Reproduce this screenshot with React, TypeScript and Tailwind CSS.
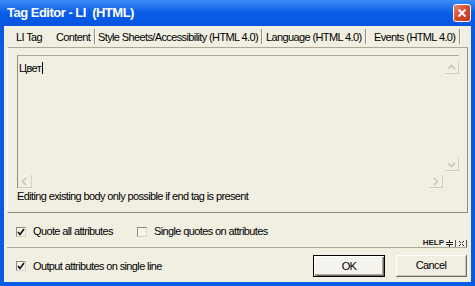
import React from "react";

const ui = "font-['Liberation_Sans',Arial,sans-serif] text-[11px] leading-[13px] tracking-[-0.62px] text-black whitespace-nowrap";

function Check({ checked }: { checked?: boolean }) {
  return (
    <span className="flex h-[10px] w-[10px] shrink-0 items-center justify-center border-t border-l border-[#8d8b82] border-r border-b border-r-[#d6d3c6] border-b-[#d6d3c6] bg-[#f4f3ee]">
      {checked ? (
        <svg width="8" height="8" viewBox="0 0 8 8">
          <path d="M1 4 L3 6.5 L7 1" fill="none" stroke="#111" strokeWidth="1.6" />
        </svg>
      ) : null}
    </span>
  );
}

function Chevron({ dir }: { dir: "up" | "down" | "left" | "right" }) {
  const d = {
    up: "M2 7 L5.5 3.5 L9 7",
    down: "M2 4 L5.5 7.5 L9 4",
    left: "M7 2 L3.5 5.5 L7 9",
    right: "M4 2 L7.5 5.5 L4 9",
  }[dir];
  return (
    <svg width="11" height="11" viewBox="0 0 11 11">
      <path d={d} fill="none" stroke="#c9c6b9" strokeWidth="1.6" />
    </svg>
  );
}

function ScrollBtn({ dir }: { dir: "up" | "down" | "left" | "right" }) {
  return (
    <div className="flex h-[13px] w-[14px] shrink-0 items-center justify-center border-r border-b border-[#d2cfc1]">
      <Chevron dir={dir} />
    </div>
  );
}

function TabSep() {
  return <div className="h-[15px] w-[2px] shrink-0 self-end border-l border-[#8f8d82] bg-[#fdfdfb]" />;
}

export default function App() {
  return (
    <div className="flex h-[286px] w-[475px] flex-col bg-[#0a5be4]">
      {/* title bar */}
      <div className="flex h-[26px] shrink-0 items-center justify-between bg-gradient-to-b from-[#3a8cf6] via-[#0a5ce6] to-[#0755e0] pl-[7px] pr-[4px]">
        <span className="whitespace-pre font-['Liberation_Sans',Arial,sans-serif] text-[13px] font-bold tracking-[-0.5px] text-white">
          Tag Editor - LI  (HTML)
        </span>
        <div className="flex h-[18px] w-[18px] items-center justify-center rounded-[3px] border border-white bg-gradient-to-br from-[#e9876b] via-[#d6472a] to-[#c23a1e]">
          <svg width="10" height="10" viewBox="0 0 10 10">
            <path d="M1.5 1.5 L8.5 8.5 M8.5 1.5 L1.5 8.5" stroke="white" strokeWidth="2" />
          </svg>
        </div>
      </div>

      {/* body */}
      <div className={`mx-[4px] flex h-[256px] flex-col bg-[#f1efe2] ${ui}`}>
        {/* tabs */}
        <div className="flex h-[21px] shrink-0 items-end pb-[3px]">
          <span className="ml-[12px] w-[40px] shrink-0">LI Tag</span>
          <span className="w-[38px] shrink-0">Content</span>
          <TabSep />
          <span className="w-[165px] shrink-0 pl-[2px]">Style Sheets/Accessibility (HTML 4.0)</span>
          <TabSep />
          <span className="w-[102px] shrink-0 pl-[3px]">Language (HTML 4.0)</span>
          <TabSep />
          <span className="w-[92px] shrink-0 pl-[7px]">Events (HTML 4.0)</span>
          <TabSep />
        </div>

        {/* panel */}
        <div className="ml-[3px] flex h-[166px] w-[461px] shrink-0 flex-col border-t border-l border-r border-b border-t-[#aca899] border-l-[#fdfdfb] border-r-[#8f8d82] border-b-[#8f8d82]">
          <div className="ml-[9px] mt-[7px] flex h-[133px] w-[442px] flex-col border-t border-l border-t-[#aca899] border-l-[#8f8d82]">
            <div className="flex flex-1">
              <div className="flex-1 pl-[1px] pt-[4px]">
                <span>Цвет</span>
                <span className="ml-[1px] inline-block h-[12px] w-[1px] translate-y-[2px] bg-black" />
              </div>
              <div className="flex w-[14px] flex-col justify-between pb-[3px] pt-[5px]">
                <ScrollBtn dir="up" />
                <ScrollBtn dir="down" />
              </div>
            </div>
            <div className="flex h-[14px] items-end">
              <ScrollBtn dir="left" />
              <div className="flex-1" />
              <ScrollBtn dir="right" />
              <div className="w-[16px]" />
            </div>
          </div>
          <div className="ml-[9px] mt-[2px]">Editing existing body only possible if end tag is present</div>
        </div>

        {/* option row 1 */}
        <div className="flex h-[27px] shrink-0 items-end pb-[2px]">
          <div className="ml-[12px] flex w-[121px] items-center gap-[7px]">
            <Check checked />
            <span>Quote all attributes</span>
          </div>
          <div className="flex items-center gap-[7px]">
            <Check />
            <span>Single quotes on attributes</span>
          </div>
        </div>

        {/* separator with help */}
        <div className="ml-[3px] mr-[4px] flex h-[8px] shrink-0 items-end justify-end border-b border-[#aca899]">
          <div className="flex h-[7px] items-end">
            <span className="text-[8px] font-bold leading-[8px] tracking-[0px] text-[#222]">HELP</span>
            <svg width="9" height="7" viewBox="0 0 9 7" className="ml-[1px]">
              <path d="M1 2.5 H8 M1 4.5 H8 M4.5 0 V2 M4.5 5 V7" stroke="#222" strokeWidth="1" />
            </svg>
            <div className="ml-[1px] h-[7px] w-[1px] bg-[#555]" />
            <svg width="9" height="7" viewBox="0 0 9 7" className="ml-[1px]">
              <path d="M2 1 L4 3 M7 1 L5 3 M2 6 L4 4 M7 6 L5 4" stroke="#222" strokeWidth="1" />
            </svg>
            <div className="h-[7px] w-[1px] bg-[#555]" />
          </div>
        </div>

        {/* bottom row */}
        <div className="flex flex-1 items-center pt-[2px]">
          <div className="ml-[12px] flex items-center gap-[7px]">
            <Check checked />
            <span>Output attributes on single line</span>
          </div>
          <div className="ml-auto mr-[4px] flex gap-[11px]">
            <button
              type="button"
              className="flex h-[22px] w-[72px] items-center justify-center border border-black bg-[#f4f3ee] shadow-[inset_1px_1px_0_#fff,inset_-1px_-1px_0_#716f64,inset_-2px_-2px_0_#aca899]"
            >
              OK
            </button>
            <button
              type="button"
              className="flex h-[22px] w-[71px] items-center justify-center border-r border-b border-[#716f64] bg-[#f1efe2] shadow-[inset_1px_1px_0_#fff,inset_-1px_-1px_0_#c9c6b7]"
            >
              Cancel
            </button>
          </div>
        </div>
      </div>
      <div className="h-[4px]" />
    </div>
  );
}
